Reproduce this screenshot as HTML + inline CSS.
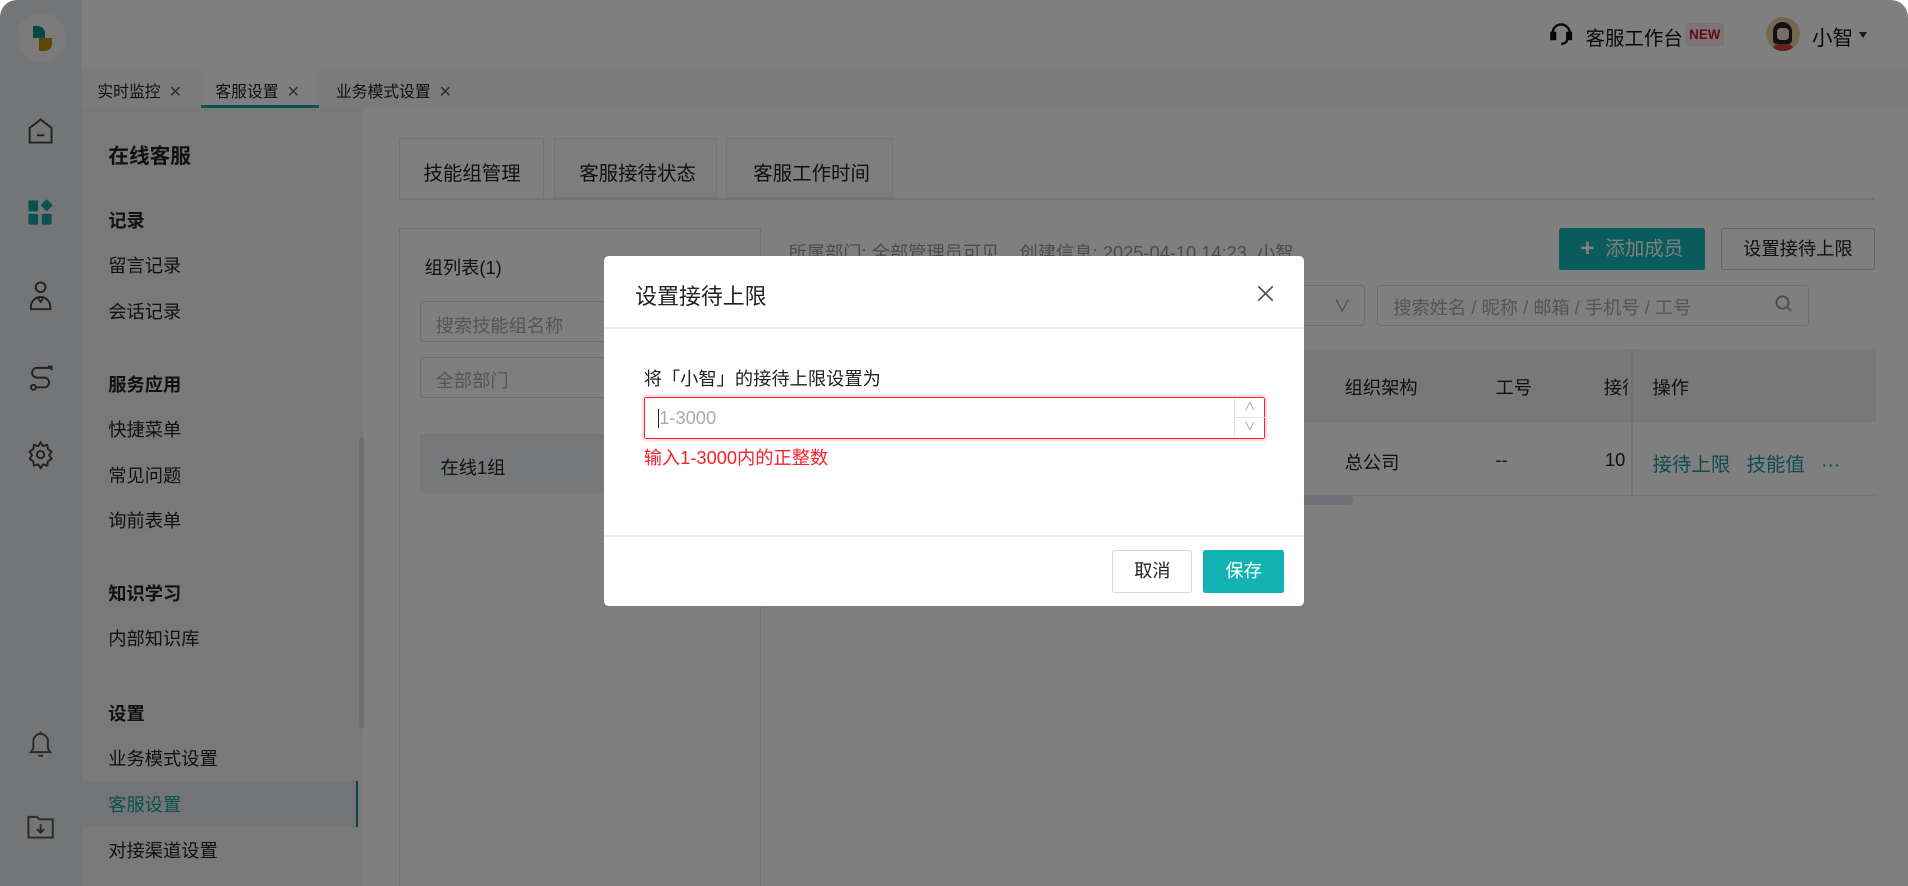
<!DOCTYPE html>
<html><head><meta charset="utf-8"><style>
*{box-sizing:border-box;margin:0;padding:0}
html,body{width:1908px;height:886px;overflow:hidden;background:#fff}
body{font-family:"Liberation Sans","Noto Sans CJK SC",sans-serif;color:#222}
#r{zoom:1.21684;width:1568px;height:728px;position:relative;overflow:hidden;background:#fff;border-radius:14px 14px 0 0}
.a{position:absolute}
.t{position:absolute;white-space:nowrap}
.nav .t{font-size:15px;color:#222;left:22px}
.nav .b{font-weight:bold;font-size:15px}
#ov{position:absolute;left:0;top:0;width:1568px;height:728px;background:rgba(0,0,0,.5)}
svg{position:absolute}
</style></head><body><div id="r">
<!-- icon bar -->
<div class="a" style="left:0;top:0;width:67px;height:728px;background:#e9ebee"></div>
<div class="a" style="left:14px;top:11px;width:40px;height:40px;border-radius:50%;background:#f4f5f6"></div>
<div class="a" style="left:27px;top:21px;width:10px;height:10px;background:#0e8f8a;border-radius:0 6px 0 0"></div>
<div class="a" style="left:32px;top:31px;width:11px;height:11px;background:#b88a0a;border-radius:0 0 6px 0"></div>
<svg style="left:21px;top:96px" width="24" height="24" viewBox="0 0 24 24" fill="none" stroke="#444" stroke-width="1.6"><path d="M3 21V9l9-7 9 7v12z"/><path d="M9 15h6"/></svg>
<svg style="left:21px;top:163px" width="24" height="24" viewBox="0 0 24 24" fill="#12a59f"><rect x="2" y="2" width="8" height="9" rx="1"/><rect x="2" y="13" width="8" height="9" rx="1"/><rect x="13" y="13" width="8" height="9" rx="1"/><path d="M17 1l5 5-5 5-5-5z"/></svg>
<svg style="left:21px;top:230px" width="24" height="26" viewBox="0 0 24 26" fill="none" stroke="#444" stroke-width="1.6"><circle cx="12" cy="6" r="4"/><path d="M4 22a8 8 0 0 1 16 0v2H4z"/><path d="M10 15l2 3 2-3"/></svg>
<svg style="left:21px;top:298px" width="24" height="26" viewBox="0 0 24 26" fill="none" stroke="#444" stroke-width="1.6"><path d="M18 3h3v3"/><path d="M20 4H9a4 4 0 0 0 0 8h6a4 4 0 0 1 0 8H8"/><circle cx="6" cy="20" r="2"/></svg>
<svg style="left:21px;top:362px" width="24" height="24" viewBox="0 0 24 24" fill="none" stroke="#444" stroke-width="1.6"><circle cx="12" cy="12" r="3"/><path d="M12 2l2 3 3.5-1 .5 3.5 3 2-2 3 2 3-3 2-.5 3.5-3.5-1-2 3-2-3-3.5 1-.5-3.5-3-2 2-3-2-3 3-2 .5-3.5 3.5 1z"/></svg>
<svg style="left:21px;top:599px" width="24" height="26" viewBox="0 0 24 26" fill="none" stroke="#555" stroke-width="1.6"><path d="M4 19h16l-2-3v-6a6 6 0 0 0-12 0v6z"/><path d="M10 22h4"/><path d="M12 2v2"/></svg>
<svg style="left:21px;top:667px" width="24" height="24" viewBox="0 0 24 24" fill="none" stroke="#555" stroke-width="1.6"><path d="M2 4h7l2 2h11v15H2z"/><path d="M12 10v7M9 14l3 3 3-3"/></svg>
<!-- header -->
<div class="a" style="left:67px;top:0;width:1501px;height:55px;background:#fff"></div>
<svg style="left:1273px;top:18px" width="20" height="20" viewBox="0 0 20 20" fill="none" stroke="#111" stroke-width="2"><path d="M3 11V9a7 7 0 0 1 14 0v2"/><rect x="2" y="9" width="3" height="5" fill="#111"/><rect x="15" y="9" width="3" height="5" fill="#111"/><path d="M15 15c-1 2-3 3-5 3"/></svg>
<div class="t" style="left:1303px;top:18px;font-size:16px;color:#111">客服工作台</div>
<div class="a" style="left:1385px;top:19px;width:32px;height:19px;background:#fde9ea;border-radius:2px;color:#d0142c;font-size:11px;font-weight:bold;text-align:center;line-height:19px">NEW</div>
<div class="a" style="left:1451px;top:14px;width:28px;height:28px;border-radius:50%;background:#e9d3a0;overflow:hidden"><div class="a" style="left:6px;top:4px;width:16px;height:18px;border-radius:8px 8px 3px 3px;background:#222"></div><div class="a" style="left:9px;top:9px;width:10px;height:10px;border-radius:3px;background:#f4d8cc"></div><div class="a" style="left:5px;top:22px;width:18px;height:8px;border-radius:6px 6px 0 0;background:#d23a3a"></div></div>
<div class="t" style="left:1489px;top:17px;font-size:17px;color:#111">小智</div>
<div class="a" style="left:1528px;top:26px;border:4px solid transparent;border-top:5px solid #333"></div>
<!-- tab strip -->
<div class="a" style="left:67px;top:55px;width:1501px;height:34px;background:#f6f6f6"></div>
<div class="t" style="left:80px;top:65px;font-size:13px">实时监控 <span style="color:#666;margin-left:3px">✕</span></div>
<div class="a" style="left:165px;top:55px;width:97px;height:34px;background:#fff;border-bottom:3px solid #18a5a0"></div>
<div class="t" style="left:177px;top:65px;font-size:13px">客服设置 <span style="color:#666;margin-left:3px">✕</span></div>
<div class="t" style="left:276px;top:65px;font-size:13px">业务模式设置 <span style="color:#666;margin-left:3px">✕</span></div>
<!-- nav -->
<div class="a nav" style="left:67px;top:89px;width:231px;height:639px;background:#f2f3f5">
<div class="a" style="left:228px;top:270px;width:4px;height:240px;background:#dcdfe3;border-radius:2px"></div>
<div class="t b" style="top:25px;font-size:17px">在线客服</div>
<div class="t b" style="top:81px">记录</div>
<div class="t" style="top:118px">留言记录</div>
<div class="t" style="top:156px">会话记录</div>
<div class="t b" style="top:216px">服务应用</div>
<div class="t" style="top:253px">快捷菜单</div>
<div class="t" style="top:291px">常见问题</div>
<div class="t" style="top:328px">询前表单</div>
<div class="t b" style="top:388px">知识学习</div>
<div class="t" style="top:425px">内部知识库</div>
<div class="t b" style="top:486px">设置</div>
<div class="t" style="top:523px">业务模式设置</div>
<div class="a" style="left:0;top:553px;width:227px;height:38px;background:#e6e8ec;border-right:2px solid #0f8a86"></div>
<div class="t" style="top:561px;color:#17a19c">客服设置</div>
<div class="t" style="top:599px">对接渠道设置</div>
</div>
<!-- main -->
<div class="a" style="left:328px;top:113px;width:119px;height:51px;border:1px solid #e6e6e6;border-bottom:none;background:#fff"></div>
<div class="t" style="left:348px;top:129px;font-size:16px">技能组管理</div>
<div class="a" style="left:455px;top:113px;width:134px;height:50px;border:1px solid #e6e6e6;background:#fafafa"></div>
<div class="t" style="left:476px;top:129px;font-size:16px">客服接待状态</div>
<div class="a" style="left:597px;top:113px;width:137px;height:50px;border:1px solid #e6e6e6;background:#fafafa"></div>
<div class="t" style="left:619px;top:129px;font-size:16px">客服工作时间</div>
<div class="a" style="left:328px;top:163px;width:1212px;height:1px;background:#e6e6e6"></div>
<div class="a" style="left:328px;top:187px;width:297px;height:545px;border:1px solid #e8e8e8"></div>
<div class="t" style="left:349px;top:209px;font-size:15px">组列表(1)</div>
<div class="a" style="left:345px;top:247px;width:200px;height:34px;border:1px solid #ddd;border-radius:3px"></div>
<div class="t" style="left:358px;top:256px;font-size:15px;color:#aaa">搜索技能组名称</div>
<div class="a" style="left:345px;top:293px;width:200px;height:34px;border:1px solid #ddd;border-radius:3px"></div>
<div class="t" style="left:358px;top:302px;font-size:15px;color:#aaa">全部部门</div>
<div class="a" style="left:345px;top:357px;width:270px;height:48px;background:#eef0f3"></div>
<div class="t" style="left:362px;top:373px;font-size:15px">在线1组</div>
<div class="t" style="left:648px;top:196px;font-size:15px;color:#999">所属部门: 全部管理员可见&nbsp;&nbsp;&nbsp;&nbsp;创建信息: 2025-04-10 14:23&nbsp;&nbsp;小智</div>
<div class="a" style="left:1281px;top:187px;width:120px;height:35px;background:#15b8b8;border-radius:2px;color:#fff;font-size:16px;line-height:35px;text-align:center"><b style="font-size:20px;vertical-align:-1px">+</b>&nbsp; 添加成员</div>
<div class="a" style="left:1414px;top:187px;width:127px;height:35px;border:1px solid #ccc;border-radius:2px;font-size:15px;line-height:33px;text-align:center">设置接待上限</div>
<div class="a" style="left:1000px;top:234px;width:122px;height:34px;border:1px solid #ddd;border-radius:3px"></div>
<div class="t" style="left:1096px;top:240px;font-size:14px;color:#999">∨</div>
<div class="a" style="left:1132px;top:234px;width:355px;height:34px;border:1px solid #ddd;border-radius:3px"></div>
<div class="t" style="left:1145px;top:242px;font-size:15px;color:#aaa">搜索姓名 / 昵称 / 邮箱 / 手机号 / 工号</div>
<svg style="left:1458px;top:242px" width="16" height="16" viewBox="0 0 16 16" fill="none" stroke="#999" stroke-width="1.5"><circle cx="7" cy="7" r="5"/><path d="M11 11l3 3"/></svg>
<div class="a" style="left:648px;top:287px;width:894px;height:60px;background:#f0f1f3"></div>
<div class="a" style="left:648px;top:407px;width:894px;height:1px;background:#ececec"></div>
<div class="a" style="left:1340px;top:287px;width:2px;height:121px;background:#e2e2e2"></div>
<div class="t" style="left:1105px;top:307px;font-size:15px">组织架构</div>
<div class="t" style="left:1229px;top:307px;font-size:15px">工号</div>
<div class="t" style="left:1318px;top:307px;font-size:15px;width:20px;overflow:hidden">接待</div>
<div class="t" style="left:1358px;top:307px;font-size:15px">操作</div>
<div class="t" style="left:1105px;top:369px;font-size:15px">总公司</div>
<div class="t" style="left:1229px;top:369px;font-size:15px">--</div>
<div class="t" style="left:1319px;top:369px;font-size:15px">10</div>
<div class="t" style="left:1358px;top:368px;font-size:16px;color:#1a9a96">接待上限&nbsp;&nbsp;&nbsp;技能值&nbsp;&nbsp;&nbsp;···</div>
<div class="a" style="left:1060px;top:408px;width:52px;height:7px;background:#dde3ea;border-radius:3px"></div>
<div id="ov"></div>
<!-- dialog -->
<div class="a" style="left:496px;top:210px;width:576px;height:288px;background:#fff;border-radius:4px">
<div class="t" style="left:26px;top:20px;font-size:18px;color:#222">设置接待上限</div>
<svg style="left:537px;top:24px" width="14" height="14" viewBox="0 0 14 14" stroke="#555" stroke-width="1.4"><path d="M1 1l12 12M13 1L1 13"/></svg>
<div class="a" style="left:0;top:59px;width:576px;height:1px;background:#ececec"></div>
<div class="t" style="left:33px;top:90px;font-size:15px">将「小智」的接待上限设置为</div>
<div class="a" style="left:33px;top:116px;width:511px;height:35px;border:1px solid #f5222d;border-radius:2px;box-shadow:0 0 0 2px rgba(245,34,45,.15)">
<div class="a" style="left:11px;top:9px;width:1px;height:16px;background:#222"></div>
<div class="t" style="left:12px;top:8px;font-size:15px;color:#aaa">1-3000</div>
<div class="a" style="left:484px;top:0;width:25px;height:33px;border-left:1px solid #e3e3e3"><div class="a" style="left:0;top:16px;width:25px;height:1px;background:#e3e3e3"></div><div class="t" style="left:8px;top:0;font-size:9px;color:#999">∧</div><div class="t" style="left:8px;top:17px;font-size:9px;color:#999">∨</div></div>
</div>
<div class="t" style="left:33px;top:155px;font-size:15px;color:#f5222d">输入1-3000内的正整数</div>
<div class="a" style="left:0;top:230px;width:576px;height:1px;background:#ececec"></div>
<div class="a" style="left:418px;top:242px;width:66px;height:35px;border:1px solid #d9d9d9;border-radius:2px;font-size:15px;text-align:center;line-height:33px">取消</div>
<div class="a" style="left:493px;top:242px;width:66px;height:35px;background:#13b3b3;border-radius:2px;font-size:15px;text-align:center;line-height:35px;color:#fff">保存</div>
</div>
</div></body></html>
